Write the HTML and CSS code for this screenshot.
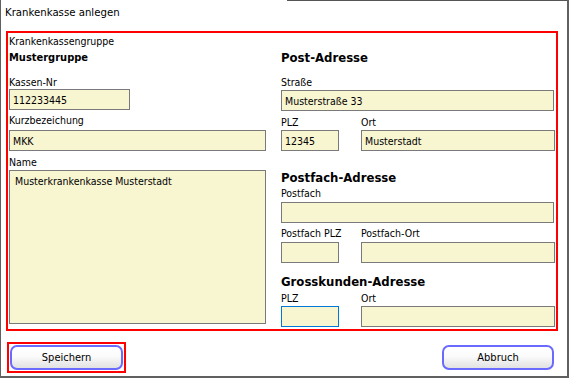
FILE: index.html
```html
<!DOCTYPE html>
<html lang="de">
<head>
<meta charset="utf-8">
<title>Krankenkasse anlegen</title>
<link rel="stylesheet" href="styles.css">
</head>
<body>
<div class="window">
  <div class="title">Krankenkasse anlegen</div>
  <div class="frame">
    <div class="col col-left">
      <div class="lbl lbl-group">Krankenkassengruppe</div>
      <div class="group-value">Mustergruppe</div>
      <div class="lbl lbl-kassennr">Kassen-Nr</div>
      <input class="inp inp-kassennr" value="112233445">
      <div class="lbl lbl-kurz">Kurzbezeichung</div>
      <input class="inp inp-kurz" value="MKK">
      <div class="lbl lbl-name">Name</div>
      <textarea class="inp area">Musterkrankenkasse Musterstadt</textarea>
    </div>
    <div class="col col-right">
      <div class="heading h-post">Post-Adresse</div>
      <div class="lbl lbl-strasse">Straße</div>
      <input class="inp inp-strasse" value="Musterstraße 33">
      <div class="split split-lbl s-post-lbl"><span class="lbl">PLZ</span><span class="lbl">Ort</span></div>
      <div class="split s-post-inp"><input class="inp" value="12345"><input class="inp" value="Musterstadt"></div>

      <div class="heading h-postfach">Postfach-Adresse</div>
      <div class="lbl lbl-postfach">Postfach</div>
      <input class="inp inp-postfach" value="">
      <div class="split split-lbl s-pf-lbl"><span class="lbl">Postfach PLZ</span><span class="lbl">Postfach-Ort</span></div>
      <div class="split s-pf-inp"><input class="inp" value=""><input class="inp" value=""></div>

      <div class="heading h-gross">Grosskunden-Adresse</div>
      <div class="split split-lbl s-gk-lbl"><span class="lbl">PLZ</span><span class="lbl">Ort</span></div>
      <div class="split s-gk-inp"><input class="inp focused" value=""><input class="inp" value=""></div>
    </div>
  </div>
  <div class="footer">
    <div class="btn-mark"><button class="btn btn-save">Speichern</button></div>
    <button class="btn btn-cancel">Abbruch</button>
  </div>
</div>
</body>
</html>
```

FILE: styles.css
```css
* { box-sizing: border-box; }

html, body {
  margin: 0;
  padding: 0;
  background: #ffffff;
}

body {
  font-family: "DejaVu Sans Condensed", "DejaVu Sans", "Liberation Sans", sans-serif;
  font-size: 10.5px;
  color: #000000;
}

.window {
  width: 569px;
  height: 378px;
  border-left: 1px solid #606060;
  border-right: 2px solid #606060;
  border-bottom: 2px solid #606060;
  background: #ffffff linear-gradient(#555555, #555555) no-repeat 286px 0 / 100% 1px;
}

.title {
  height: 31px;
  padding: 6px 0 0 4px;
  font-size: 11.3px;
  line-height: 14px;
}

.frame {
  margin-left: 5px;
  width: 552px;
  height: 300px;
  border: 2px solid #ff0000;
  padding: 0 2px 0 1px;
  display: grid;
  grid-template-columns: 257px 273px;
  column-gap: 15px;
  align-items: start;
}

.col {
  display: flex;
  flex-direction: column;
}

.lbl {
  display: block;
  line-height: 13px;
  white-space: nowrap;
}

.group-value {
  font-weight: bold;
  font-size: 11px;
  line-height: 14px;
  margin-top: 3px;
}

.heading {
  font-weight: bold;
  font-size: 13px;
  line-height: 16px;
}

.inp {
  display: block;
  height: 21px;
  margin: 0;
  padding: 0 3px;
  border: 1px solid #7a7a7a;
  border-radius: 0;
  background: #f8f5d1;
  font-family: inherit;
  font-size: 10.5px;
  color: #000000;
  outline: none;
  width: 100%;
}

.inp.focused { border-color: #0078d7; }

.area {
  height: 154px;
  padding: 4px 5px;
  resize: none;
  overflow: hidden;
  line-height: 13px;
}

/* left column spacing */
.lbl-group { margin-top: 2px; }
.lbl-kassennr { margin-top: 11px; }
.inp-kassennr { width: 121px; }
.lbl-kurz { margin-top: 4px; }
.inp-kurz { margin-top: 3px; }
.lbl-name { margin-top: 5px; }
.area { margin-top: 1px; }

/* right column spacing */
.split {
  display: grid;
  grid-template-columns: 58px 194px;
  column-gap: 22px;
}

.h-post { margin-top: 17px; }
.lbl-strasse { margin-top: 10px; }
.inp-strasse { margin-top: 1px; }
.s-post-lbl { margin-top: 5px; }
.s-post-inp { margin-top: 1px; }

.h-postfach { margin-top: 19px; }
.lbl-postfach { margin-top: 1px; }
.inp-postfach { margin-top: 2px; }
.s-pf-lbl { margin-top: 4px; }
.s-pf-inp { margin-top: 2px; }

.h-gross { margin-top: 11px; }
.s-gk-lbl { margin-top: 2px; }
.s-gk-inp { margin-top: 1px; }

/* footer */
.footer {
  display: flex;
  justify-content: space-between;
  align-items: flex-start;
  margin-top: 11px;
  padding: 0 13px 0 6px;
}

.btn-mark {
  border: 2px solid #ff0000;
  padding: 1px;
}

.btn {
  display: block;
  height: 25px;
  margin: 0;
  padding: 0;
  border: 2px solid #6a6aff;
  border-radius: 7px;
  background: linear-gradient(#ffffff 0%, #fbfbfb 45%, #ececec 75%, #e2e2e2 100%);
  font-family: inherit;
  font-size: 11px;
  color: #000000;
  text-align: center;
}

.btn-save { width: 113px; }

.btn-cancel {
  width: 112px;
  margin-top: 3px;
}
```
